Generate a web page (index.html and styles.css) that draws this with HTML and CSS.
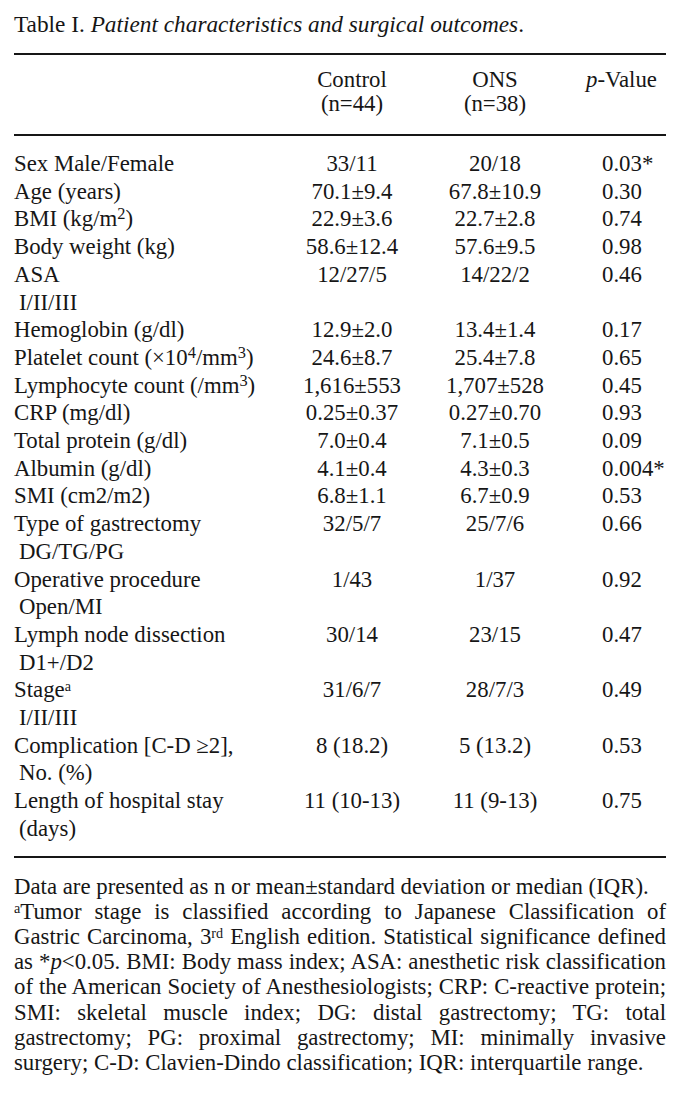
FILE: index.html
```html
<!DOCTYPE html>
<html>
<head>
<meta charset="utf-8">
<link rel="stylesheet" href="styles.css">
</head>
<body>
<div class="page">
  <p class="caption">Table I. <i>Patient characteristics and surgical outcomes</i>.</p>
  <table class="data">
    <colgroup>
      <col class="c-label"><col class="c-ctrl"><col class="c-ons"><col class="c-p">
    </colgroup>
    <thead>
      <tr>
        <th class="lab"></th>
        <th class="mid">Control<br>(n=44)</th>
        <th class="mid">ONS<br>(n=38)</th>
        <th class="pv"><i>p</i>-Value</th>
      </tr>
    </thead>
    <tbody>
      <tr class="first"><td class="lab">Sex Male/Female</td><td class="mid">33/11</td><td class="mid">20/18</td><td class="pv">0.03*</td></tr>
      <tr><td class="lab">Age (years)</td><td class="mid">70.1±9.4</td><td class="mid">67.8±10.9</td><td class="pv">0.30</td></tr>
      <tr><td class="lab">BMI (kg/m<sup>2</sup>)</td><td class="mid">22.9±3.6</td><td class="mid">22.7±2.8</td><td class="pv">0.74</td></tr>
      <tr><td class="lab">Body weight (kg)</td><td class="mid">58.6±12.4</td><td class="mid">57.6±9.5</td><td class="pv">0.98</td></tr>
      <tr><td class="lab">ASA<br><span class="ind">I/II/III</span></td><td class="mid">12/27/5</td><td class="mid">14/22/2</td><td class="pv">0.46</td></tr>
      <tr><td class="lab">Hemoglobin (g/dl)</td><td class="mid">12.9±2.0</td><td class="mid">13.4±1.4</td><td class="pv">0.17</td></tr>
      <tr><td class="lab">Platelet count (×10<sup>4</sup>/mm<sup>3</sup>)</td><td class="mid">24.6±8.7</td><td class="mid">25.4±7.8</td><td class="pv">0.65</td></tr>
      <tr><td class="lab">Lymphocyte count (/mm<sup>3</sup>)</td><td class="mid">1,616±553</td><td class="mid">1,707±528</td><td class="pv">0.45</td></tr>
      <tr><td class="lab">CRP (mg/dl)</td><td class="mid">0.25±0.37</td><td class="mid">0.27±0.70</td><td class="pv">0.93</td></tr>
      <tr><td class="lab">Total protein (g/dl)</td><td class="mid">7.0±0.4</td><td class="mid">7.1±0.5</td><td class="pv">0.09</td></tr>
      <tr><td class="lab">Albumin (g/dl)</td><td class="mid">4.1±0.4</td><td class="mid">4.3±0.3</td><td class="pv">0.004*</td></tr>
      <tr><td class="lab">SMI (cm2/m2)</td><td class="mid">6.8±1.1</td><td class="mid">6.7±0.9</td><td class="pv">0.53</td></tr>
      <tr><td class="lab">Type of gastrectomy<br><span class="ind">DG/TG/PG</span></td><td class="mid">32/5/7</td><td class="mid">25/7/6</td><td class="pv">0.66</td></tr>
      <tr><td class="lab">Operative procedure<br><span class="ind">Open/MI</span></td><td class="mid">1/43</td><td class="mid">1/37</td><td class="pv">0.92</td></tr>
      <tr><td class="lab">Lymph node dissection<br><span class="ind">D1+/D2</span></td><td class="mid">30/14</td><td class="mid">23/15</td><td class="pv">0.47</td></tr>
      <tr><td class="lab">Stage<sup class="sa">a</sup><br><span class="ind">I/II/III</span></td><td class="mid">31/6/7</td><td class="mid">28/7/3</td><td class="pv">0.49</td></tr>
      <tr><td class="lab">Complication [C-D ≥2],<br><span class="ind">No. (%)</span></td><td class="mid">8 (18.2)</td><td class="mid">5 (13.2)</td><td class="pv">0.53</td></tr>
      <tr class="last"><td class="lab">Length of hospital stay<br><span class="ind">(days)</span></td><td class="mid">11 (10-13)</td><td class="mid">11 (9-13)</td><td class="pv">0.75</td></tr>
    </tbody>
  </table>
  <div class="notes">
    <p class="note">Data are presented as n or mean±standard deviation or median (IQR).</p>
    <p class="note just">
      <span class="ln"><sup class="sa">a</sup>Tumor stage is classified according to Japanese Classification of</span>
      <span class="ln">Gastric Carcinoma, 3<sup class="sa">rd</sup> English edition. Statistical significance defined</span>
      <span class="ln">as *<i>p</i>&lt;0.05. BMI: Body mass index; ASA: anesthetic risk classification</span>
      <span class="ln">of the American Society of Anesthesiologists; CRP: C-reactive protein;</span>
      <span class="ln">SMI: skeletal muscle index; DG: distal gastrectomy; TG: total</span>
      <span class="ln">gastrectomy; PG: proximal gastrectomy; MI: minimally invasive</span>
      <span class="ln end">surgery; C-D: Clavien-Dindo classification; IQR: interquartile range.</span>
    </p>
  </div>
</div>
</body>
</html>
```

FILE: styles.css
```css
html, body {
  margin: 0;
  padding: 0;
  background: #ffffff;
}

body {
  font-family: "Liberation Serif", "Times New Roman", serif;
  font-size: 22.8px;
  color: #161616;
}

.page {
  width: 652px;
  padding: 9px 0 0 14px;
}

.caption {
  margin: 0;
  font-size: 23.3px;
  line-height: 30px;
}

.data {
  width: 652px;
  border-collapse: collapse;
  margin-top: 14px;
  line-height: 27.7px;
}

.c-label { width: 280px; }
.c-ctrl { width: 116px; }
.c-ons { width: 170px; }
.c-p { width: 86px; }

.data th {
  font-weight: normal;
  vertical-align: top;
  padding: 0;
}

.data thead tr {
  border-top: 2px solid #161616;
  border-bottom: 2px solid #161616;
}

.data thead th {
  padding-top: 13px;
  padding-bottom: 18px;
  line-height: 24px;
}

.data td {
  padding: 0;
  vertical-align: top;
  white-space: nowrap;
}

.data tr.first td {
  padding-top: 14px;
}

.data tr.last td {
  padding-bottom: 13px;
}

.data tbody tr.last {
  border-bottom: 2px solid #161616;
}

.lab { text-align: left; }
.mid { text-align: center; }
.data th.pv { text-align: left; padding-left: 6px; }
.data td.pv { text-align: left; padding-left: 22px; }

.ind { padding-left: 5px; }

sup {
  font-size: 0.72em;
  line-height: 0;
  vertical-align: 0.42em;
}

sup.sa {
  font-size: 0.62em;
}

.notes {
  padding-top: 16px;
}

.note {
  margin: 0;
  line-height: 25.2px;
}

.ln {
  display: block;
  text-align: justify;
  text-align-last: justify;
  white-space: nowrap;
}

.ln.end {
  text-align-last: left;
}
```
